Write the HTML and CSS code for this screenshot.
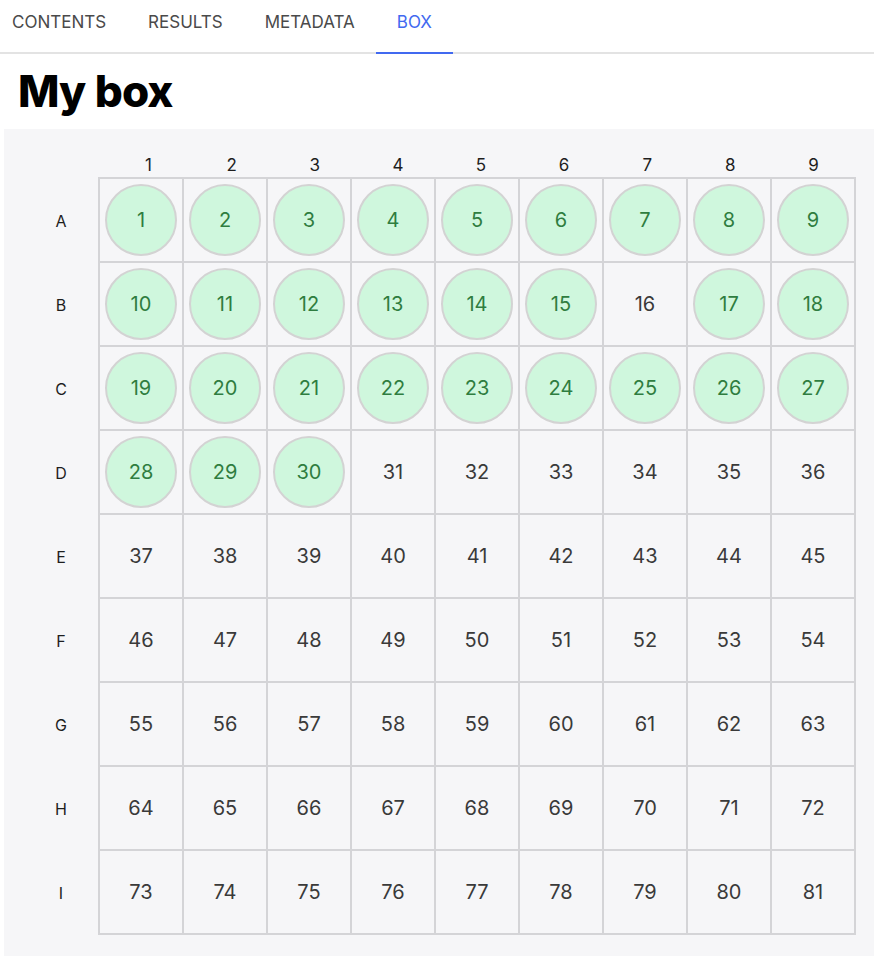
FILE: index.html
```html
<!DOCTYPE html>
<html lang="en">
<head>
<meta charset="utf-8">
<title>My box</title>
<link rel="stylesheet" href="styles.css">
</head>
<body>
<nav class="tabs">
  <a class="tab">CONTENTS</a>
  <a class="tab">RESULTS</a>
  <a class="tab">METADATA</a>
  <a class="tab active">BOX</a>
</nav>
<h1 class="title">My box</h1>
<section class="panel">
  <div class="col-heads">
    <span>1</span><span>2</span><span>3</span><span>4</span><span>5</span><span>6</span><span>7</span><span>8</span><span>9</span>
  </div>
  <div class="plate-wrap">
    <div class="row-labels">
      <span>A</span><span>B</span><span>C</span><span>D</span><span>E</span><span>F</span><span>G</span><span>H</span><span>I</span>
    </div>
    <div class="plate" id="plate"></div>
  </div>
</section>
<script src="app.js"></script>
</body>
</html>
```
FILE: app.js
```js
const plate = document.getElementById('plate');
for (let i = 1; i <= 81; i++) {
  const cell = document.createElement('div');
  cell.className = 'cell';
  const filled = i <= 30 && i !== 16;
  const inner = document.createElement('span');
  inner.className = filled ? 'well filled' : 'well';
  inner.textContent = i;
  cell.appendChild(inner);
  plate.appendChild(cell);
}
```
FILE: styles.css
```css
* { box-sizing: border-box; }
html, body { margin: 0; padding: 0; background: #ffffff; }
body {
  font-family: Inter, "Open Sans", "Liberation Sans", sans-serif;
  color: #222;
}
.tabs {
  display: flex;
  height: 54px;
  border-bottom: 2px solid #e3e3e3;
}
.tab {
  display: flex;
  align-items: center;
  padding: 0 21px;
  height: 54px;
  margin-bottom: -2px;
  padding-bottom: 8px;
  border-bottom: 2px solid transparent;
  font-size: 17px;
  color: #4a4a4a;
}
.tab:first-child { padding-left: 12px; }
.tab.active {
  color: #4169f0;
  border-bottom-color: #4169f0;
}
.title {
  margin: 0;
  padding: 9px 0 0 18px;
  height: 75px;
  font-size: 44px;
  font-weight: 800;
  line-height: 56px;
  letter-spacing: -1px;
  word-spacing: 1px;
  color: #000;
}
.panel {
  margin-left: 4px;
  background: #f6f6f8;
  padding: 24px 18px 21px 20px;
}
.col-heads {
  display: grid;
  grid-template-columns: repeat(9, 1fr);
  width: 748px;
  margin-left: 83px;
  height: 24px;
  align-items: center;
  font-size: 17px;
  color: #1e1e1e;
}
.col-heads span { text-align: center; line-height: 24px; }
.plate-wrap { display: flex; }
.row-labels {
  width: 74px;
  display: grid;
  grid-template-rows: repeat(9, 84px);
  padding-top: 2px;
  font-size: 16px;
  color: #1e1e1e;
}
.row-labels span {
  display: flex;
  align-items: center;
  justify-content: center;
}
.plate {
  display: grid;
  grid-template-columns: repeat(9, 82px);
  grid-auto-rows: 82px;
  gap: 2px;
  background: #d4d4d7;
  border: 2px solid #d4d4d7;
}
.cell {
  background: #f6f6f8;
  display: flex;
  align-items: center;
  justify-content: center;
}
.well {
  width: 72px;
  height: 72px;
  border-radius: 50%;
  display: flex;
  align-items: center;
  justify-content: center;
  font-size: 20px;
  color: #3a3a3a;
}
.well.filled {
  background: #cff7dd;
  border: 2px solid #d3d3d3;
  color: #2f7d40;
}
```
